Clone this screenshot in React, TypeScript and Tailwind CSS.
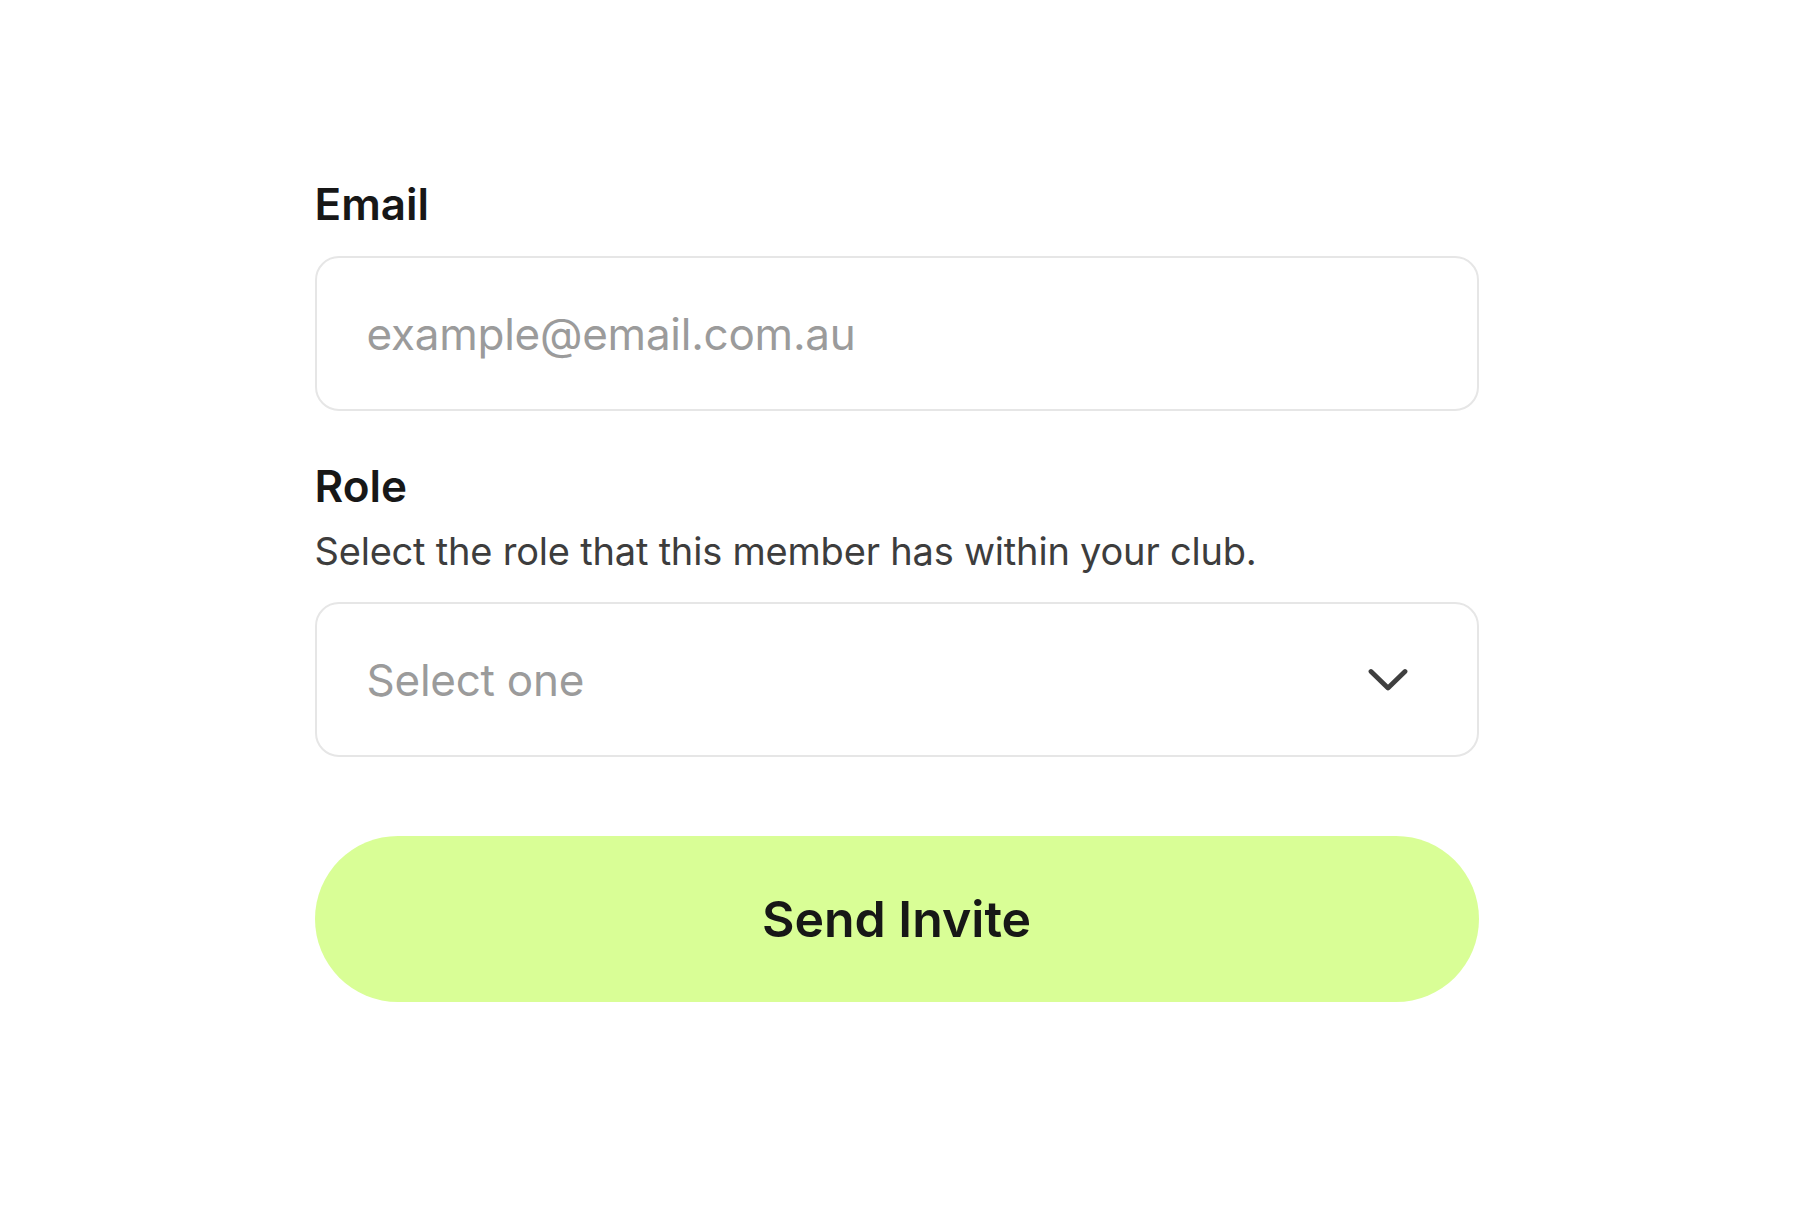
import React from "react";

// Invite member form: email + role select + send button

const ChevronDown = () => {
  return (
    <svg width="40" height="24" viewBox="0 0 40 24" fill="none">
      <path
        d="M3 3.5L20 20L37 3.5"
        stroke="#3f3f3f"
        strokeWidth="4.8"
        strokeLinecap="round"
        strokeLinejoin="round"
      />
    </svg>
  );
};

export default function App() {
  return (
    <div
      className="min-h-screen bg-white flex justify-center"
      style={{ fontFamily: "Inter, 'Noto Sans', sans-serif" }}
    >
      <form className="w-[1164px] pt-[178px] flex flex-col">
        <label className="text-[44px] leading-[52px] font-semibold text-[#171717]">
          Email
        </label>
        <input
          type="email"
          placeholder="example@email.com.au"
          className="mt-[26px] h-[155px] w-full rounded-[24px] border-2 border-[#e6e6e6] px-[50px] text-[44px] tracking-[-0.25px] text-[#171717] placeholder:text-[#9b9b9b] outline-none"
        />

        <label className="mt-[49px] text-[44px] leading-[52px] font-semibold text-[#171717]">
          Role
        </label>
        <p className="mt-[17px] text-[38px] leading-[44px] tracking-[-0.2px] text-[#3d3d3d]">
          Select the role that this member has within your club.
        </p>
        <div className="mt-[29px] h-[155px] w-full rounded-[24px] border-2 border-[#e6e6e6] pl-[50px] pr-[69px] flex items-center justify-between">
          <span className="text-[44px] tracking-[-0.25px] text-[#9b9b9b]">Select one</span>
          <ChevronDown />
        </div>

        <button
          type="button"
          className="mt-[79px] h-[166px] w-full rounded-full bg-[#d9fe96] text-[50px] font-semibold text-[#171717]"
        >
          Send Invite
        </button>
      </form>
    </div>
  );
}
